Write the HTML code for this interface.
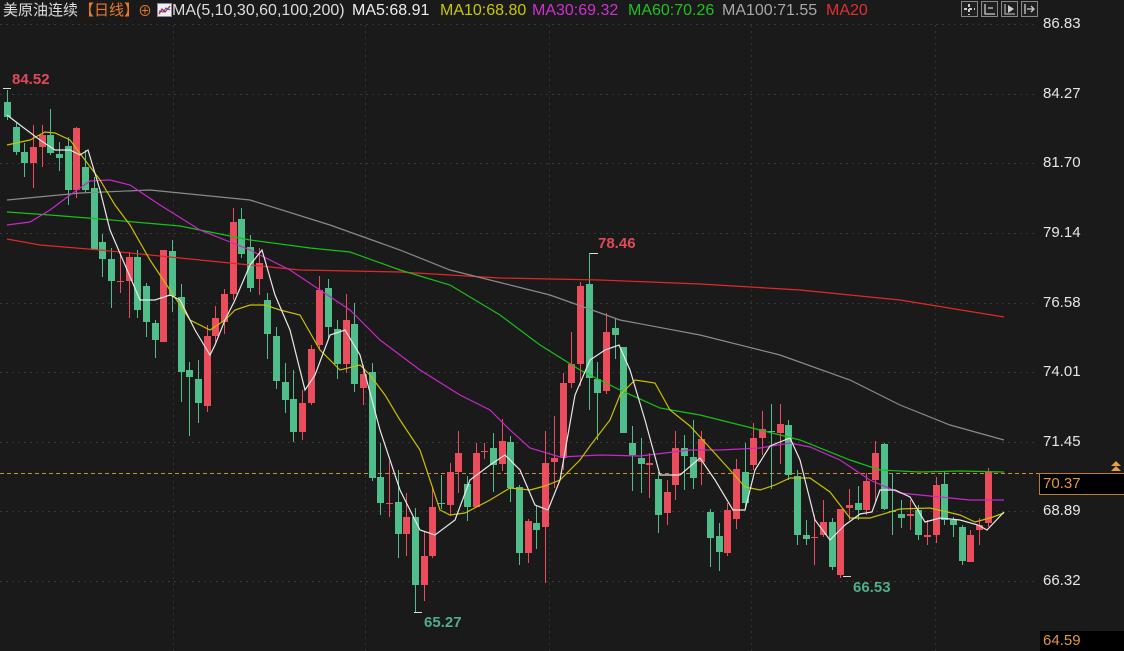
<!DOCTYPE html>
<html><head><meta charset="utf-8">
<style>
body{margin:0;background:#1a1a1a;width:1124px;height:651px;overflow:hidden;font-family:"Liberation Sans","Noto Sans CJK SC",sans-serif;}
.h{position:absolute;top:1px;font-size:16px;white-space:nowrap;line-height:20px;}
.ax{position:absolute;left:1043px;font-size:15px;color:#e6e6e6;}
</style></head><body>
<svg id="c" width="1124" height="651" style="position:absolute;left:0;top:0"></svg>
<span class="h" style="left:3px;color:#ddd;font-size:15px">美原油连续</span>
<span class="h" style="left:79px;color:#e8792a;font-size:15px">【日线】</span>
<span class="h" style="left:138px;color:#e8792a;font-size:14px">⊕</span>
<span style="position:absolute;left:157px;top:3px;width:13px;height:12px;background:#eee;border:1px solid #88a"><svg width="13" height="12" style="position:absolute;left:0;top:0"><polyline points="1,10 4,5 7,8 12,2" fill="none" stroke="#d02020" stroke-width="1.3"/><polyline points="1,7 5,8 8,4 12,6" fill="none" stroke="#2050d0" stroke-width="1"/></svg></span>
<span class="h" style="left:172px;color:#ddd">MA(5,10,30,60,100,200)</span>
<span class="h" style="left:352px;color:#eee">MA5:68.91</span>
<span class="h" style="left:440px;color:#c8c800">MA10:68.80</span>
<span class="h" style="left:532px;color:#d030d0">MA30:69.32</span>
<span class="h" style="left:628px;color:#20c020">MA60:70.26</span>
<span class="h" style="left:722px;color:#a8a8a8">MA100:71.55</span>
<span class="h" style="left:826px;color:#e03030">MA20</span>
<div class="ax" style="top:15px">86.83</div>
<div class="ax" style="top:85px">84.27</div>
<div class="ax" style="top:154px">81.70</div>
<div class="ax" style="top:224px">79.14</div>
<div class="ax" style="top:294px">76.58</div>
<div class="ax" style="top:363px">74.01</div>
<div class="ax" style="top:433px">71.45</div>
<div class="ax" style="top:502px">68.89</div>
<div class="ax" style="top:572px">66.32</div>
<div style="position:absolute;left:1039px;top:473px;width:83px;height:20px;background:#000;border:1px solid #c07a30;color:#e09a40;font-size:15px;line-height:20px;padding-left:3px">70.37</div>
<div style="position:absolute;left:1040px;top:631px;width:84px;height:20px;background:#000;color:#e09a40;font-size:15px;line-height:20px;padding-left:3px">64.59</div>
<script>
var s=document.getElementById('c'),h='';
function L(x1,y1,x2,y2,c,d,w){h+='<line x1="'+x1+'" y1="'+y1+'" x2="'+x2+'" y2="'+y2+'" stroke="'+c+'" stroke-width="'+(w||1)+'"'+(d?' stroke-dasharray="'+d+'"':'')+'/>';}
[24,94,163,233,303,372,442,511,581].forEach(function(y){L(0,y+0.5,1035,y+0.5,'#383838','2,4');});
[173,365,549,751,935].forEach(function(x){L(x+0.5,25,x+0.5,651,'#333','2,4');});
L(0,473.5,1068,473.5,'#d08a30','4,3');
var C=[[102,117,90,120,'G'],[127,152,122,155,'G'],[152,163,143,177,'G'],[163,147,125,188,'R'],[147,135,125,167,'R'],[135,153,109,155,'G'],[154,158,142,171,'G'],[146,190,137,205,'G'],[190,128,127,198,'R'],[167,190,150,193,'G'],[188,250,177,250,'G'],[242,259,234,277,'G'],[259,281,248,308,'G'],[282,281,253,293,'R'],[281,257,252,318,'R'],[257,310,250,318,'G'],[286,322,283,337,'G'],[323,340,320,358,'G'],[342,250,250,342,'R'],[251,296,240,312,'G'],[297,372,284,402,'G'],[370,377,362,436,'G'],[379,403,360,423,'G'],[406,336,325,412,'R'],[336,318,306,342,'R'],[322,294,289,334,'R'],[294,222,208,300,'R'],[219,254,208,258,'G'],[247,288,235,292,'G'],[279,263,248,295,'R'],[300,334,293,359,'G'],[336,381,327,389,'G'],[382,400,363,413,'G'],[399,432,370,442,'G'],[432,403,390,440,'R'],[403,349,345,405,'R'],[345,290,276,350,'R'],[288,327,279,340,'G'],[329,364,320,379,'G'],[364,320,294,373,'R'],[324,384,303,392,'G'],[388,374,365,405,'R'],[372,478,363,481,'G'],[477,503,443,515,'G'],[504,503,461,517,'R'],[502,534,470,558,'G'],[534,517,493,556,'R'],[517,585,508,613,'G'],[585,556,531,601,'R'],[556,507,488,558,'R'],[503,504,475,509,'G'],[505,472,463,516,'R'],[472,453,431,493,'R'],[484,507,476,521,'G'],[507,453,443,507,'R'],[452,451,443,459,'R'],[448,465,433,492,'G'],[464,441,419,471,'R'],[442,488,436,502,'G'],[487,553,485,565,'G'],[553,521,519,563,'R'],[523,530,505,549,'G'],[527,463,431,583,'R'],[462,458,416,488,'R'],[458,383,373,470,'R'],[383,364,332,388,'R'],[364,286,282,386,'R'],[284,378,253,410,'G'],[379,393,362,440,'G'],[391,332,313,394,'R'],[328,335,318,359,'G'],[347,433,347,433,'G'],[443,455,426,491,'G'],[458,464,438,493,'G'],[465,463,453,498,'R'],[479,515,472,533,'G'],[513,492,480,525,'R'],[485,448,431,500,'R'],[448,456,435,490,'G'],[457,478,420,489,'G'],[462,439,431,485,'R'],[512,538,509,567,'G'],[536,552,523,571,'G'],[553,510,503,556,'R'],[519,469,459,529,'R'],[472,503,443,508,'G'],[465,438,423,470,'R'],[438,429,411,455,'R'],[431,432,404,489,'G'],[433,424,404,464,'R'],[425,475,420,480,'G'],[476,535,470,545,'G'],[535,539,520,545,'G'],[538,537,515,565,'R'],[535,522,500,537,'R'],[522,567,518,570,'G'],[575,509,509,578,'R'],[508,505,489,520,'R'],[503,510,486,520,'G'],[510,481,473,515,'R'],[480,453,441,501,'R'],[444,509,443,510,'G'],[511,512,474,535,'G'],[514,518,500,528,'G'],[516,514,500,530,'R'],[510,535,505,540,'G'],[537,535,520,545,'R'],[535,485,477,543,'R'],[484,520,472,525,'G'],[520,525,517,537,'G'],[527,561,525,565,'G'],[562,535,530,562,'R'],[530,525,518,545,'R'],[523,472,468,527,'R']];
C.forEach(function(c,i){var x=Math.round(7+i*8.68),col=c[4]=='R'?'#ec4d5c':'#4fbe8a';var t=Math.min(c[0],c[1]),b=Math.max(c[0],c[1]);if(b-t<1)b=t+1;
L(x+0.5,c[2],x+0.5,c[3],col);h+='<rect x="'+(x-3)+'" y="'+t+'" width="7" height="'+(b-t)+'" fill="'+col+'"/>';});
function P(p,c){h+='<polyline points="'+p+'" fill="none" stroke="'+c+'" stroke-width="1.2"/>';}
P('7,239 40,245 100,250 200,260 300,270 400,272 500,278 600,280 700,284 800,290 900,300 1004,317','#e02828');
P('7,200 80,193 150,190 250,200 330,225 400,250 450,270 550,295 620,320 700,335 780,355 850,380 900,405 950,425 1004,440','#8a8a8a');
P('7,212 50,215 100,219 180,226 250,240 310,248 350,252 400,270 450,285 500,315 540,345 580,370 620,390 660,408 700,415 760,430 800,440 850,460 880,470 920,472 960,471 1004,472','#18c018');
P('7,225 30,222 50,210 70,195 90,181 110,180 130,185 160,205 200,230 250,250 290,270 320,290 350,310 380,340 420,370 460,395 490,410 510,430 530,448 560,457 600,455 640,456 690,450 720,450 760,448 790,443 810,447 840,460 870,480 900,493 940,497 970,500 1004,500','#c828c8');
P('7,145 30,140 45,132 55,133 70,140 85,160 100,180 115,205 130,225 150,260 170,290 190,320 210,330 225,320 235,310 250,305 265,305 280,310 300,315 320,350 340,370 360,365 370,375 385,395 400,420 420,450 440,510 450,515 465,513 490,500 510,488 530,490 545,486 560,480 580,460 590,446 610,420 620,395 635,380 655,383 670,410 690,426 710,448 730,470 745,487 760,490 775,485 790,478 810,478 830,492 850,518 870,518 900,509 930,508 960,515 975,522 990,518 1004,513','#c8c000');
P('7,115 20,125 40,140 55,150 70,150 80,155 88,150 100,190 110,230 125,265 140,300 155,300 170,295 180,300 195,330 210,355 215,345 225,320 235,300 250,265 262,250 275,295 290,330 305,390 315,375 330,335 345,330 360,355 380,430 400,490 420,530 435,535 455,520 470,480 490,465 505,455 520,470 535,505 548,510 560,480 575,395 590,360 605,350 619,345 630,370 645,420 660,475 680,475 700,458 715,480 733,510 745,510 755,470 770,446 790,438 800,460 815,520 830,540 845,525 860,514 872,512 880,490 895,490 910,497 925,522 940,518 960,520 978,525 987,530 1004,512','#e8e8e8');
function T(x,y,t,c){h+='<text x="'+x+'" y="'+y+'" fill="'+c+'" font-size="15" font-weight="bold" font-family="Liberation Sans,sans-serif">'+t+'</text>';}
L(3,88.5,11,88.5,'#ddd');T(12,84,'84.52','#e04a58');
L(590,253.5,598,253.5,'#ddd');T(598,248,'78.46','#e04a58');
L(414,612.5,422,612.5,'#ddd');T(424,627,'65.27','#4fae88');
L(843,576.5,851,576.5,'#ddd');T(853,592,'66.53','#4fae88');
h+='<path d="M1111,466 L1116,461 L1121,466 Z M1111,471 L1116,466 L1121,471 Z" fill="#e8a040"/>';
[961,981,1001,1021].forEach(function(x,i){h+='<rect x="'+x+'.5" y="1.5" width="16" height="15" fill="#202020" stroke="#888"/>';});
h+='<path d="M969,4v11M964,9h11" stroke="#ccc" stroke-width="2" stroke-dasharray="3,2"/>';
h+='<path d="M985,4v10h10M988,8h5" stroke="#ccc" stroke-width="1.3" fill="none"/><path d="M1005,4v10h10" stroke="#ccc" fill="none"/><path d="M1008,5l6,4l-6,4z" fill="#ccc"/><path d="M1025,4v10M1027,9h7M1031,6l3,3l-3,3" stroke="#ccc" stroke-width="1.3" fill="none"/>';
s.innerHTML=h;
</script>
</body></html>
